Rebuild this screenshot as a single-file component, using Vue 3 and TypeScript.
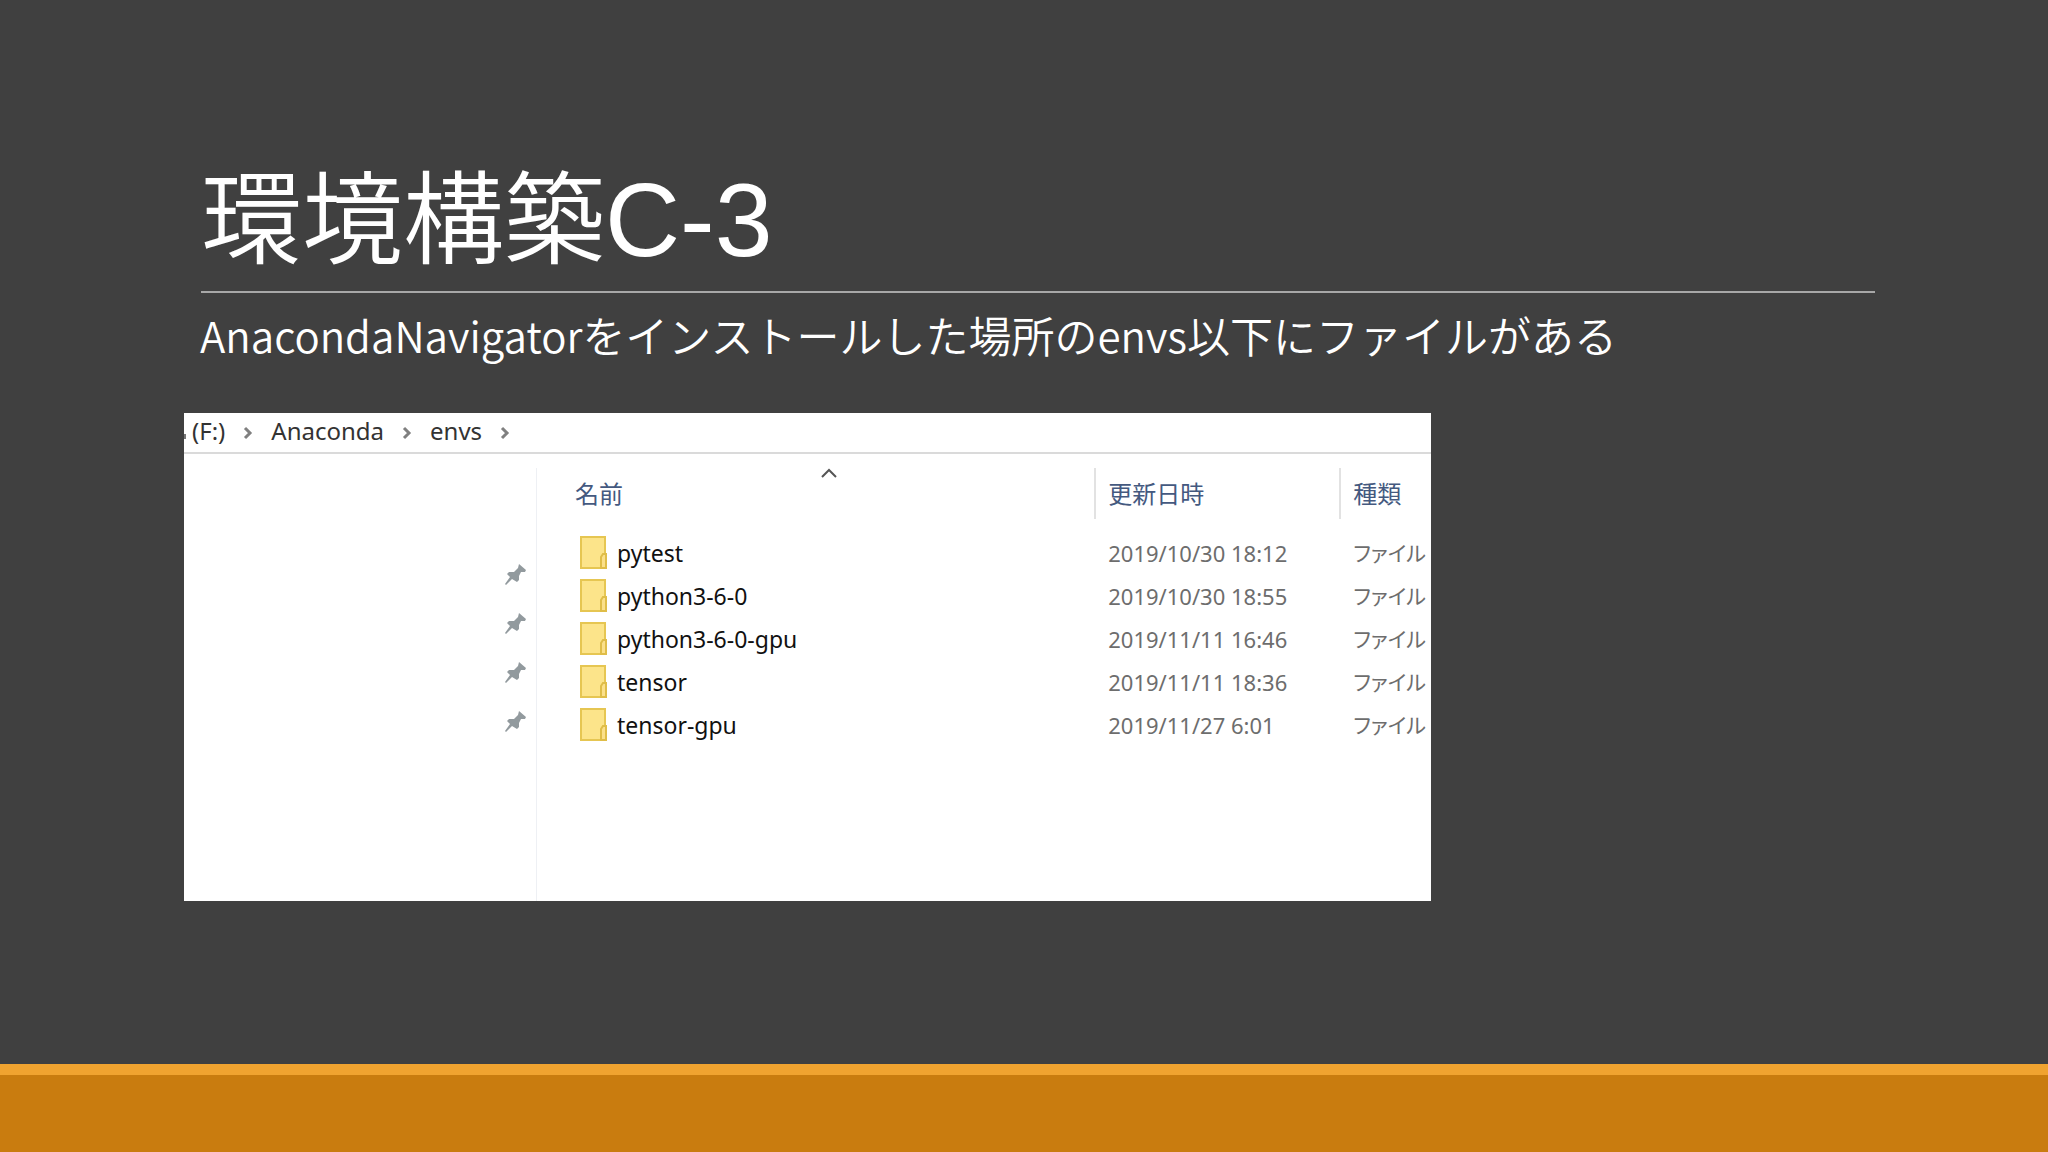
<script setup lang="ts">
interface Entry {
  name: string
  modified: string
  kind: string
}

const crumbs: string[] = ['(F:)', 'Anaconda', 'envs']
const kind = 'ファイル'
const entries: Entry[] = [
  { name: 'pytest', modified: '2019/10/30 18:12', kind },
  { name: 'python3-6-0', modified: '2019/10/30 18:55', kind },
  { name: 'python3-6-0-gpu', modified: '2019/11/11 16:46', kind },
  { name: 'tensor', modified: '2019/11/11 18:36', kind },
  { name: 'tensor-gpu', modified: '2019/11/27 6:01', kind },
]
const pinCount = 4
</script>

<template>
  <main class="slide">
    <header class="heading">
      <h1>環境構築<span class="latin">C-3</span></h1>
    </header>
    <p class="lead">
      <span class="word">AnacondaNavigator</span>をインストールした場所の<span class="word">envs</span>以下にファイルがある
    </p>

    <section class="explorer">
      <nav class="path">
        <template v-for="crumb in crumbs" :key="crumb">
          <a href="#">{{ crumb }}</a>
          <svg class="chevron" viewBox="0 0 10 14" aria-hidden="true">
            <path d="M2 2l5 5-5 5" fill="none" stroke="#808080" stroke-width="3" />
          </svg>
        </template>
      </nav>

      <div class="body">
        <aside class="pins">
          <svg v-for="n in pinCount" :key="n" class="pin" viewBox="0 0 21 21" aria-hidden="true">
            <path
              d="M14 0l7 6-1 2-4 0-2 4 0 4-2 2-5-3-6 6-1-1 5-7-3-3 2-2 5 0 4-4z"
              fill="#929a9e"
            />
          </svg>
        </aside>

        <div class="list">
          <table>
            <colgroup>
              <col />
              <col class="col-date" />
              <col class="col-kind" />
            </colgroup>
            <thead>
              <tr>
                <th scope="col" class="name">
                  名前
                  <svg class="sort" viewBox="0 0 16 10" aria-hidden="true">
                    <path d="M1 9l7-7 7 7" fill="none" stroke="#555" stroke-width="2" />
                  </svg>
                </th>
                <th scope="col">更新日時</th>
                <th scope="col">種類</th>
              </tr>
            </thead>
            <tbody>
              <tr v-for="entry in entries" :key="entry.name">
                <td class="name">
                  <div class="file">
                    <svg class="folder" viewBox="0 0 27 33" aria-hidden="true">
                      <path d="M1 1h24v18l1 1v12H1z" fill="#fce48a" stroke="#e6c652" stroke-width="2" />
                      <path d="M21 32V21l2-3h3v14z" fill="#fbe08a" stroke="#dfbd48" stroke-width="2" />
                    </svg>
                    <span>{{ entry.name }}</span>
                  </div>
                </td>
                <td class="date">{{ entry.modified }}</td>
                <td class="kind">{{ entry.kind }}</td>
              </tr>
            </tbody>
          </table>
        </div>
      </div>
    </section>

    <footer class="band"></footer>
  </main>
</template>

<style>
body {
  margin: 0;
  background: #404040;
}
</style>

<style scoped>
.slide {
  box-sizing: border-box;
  display: flex;
  flex-direction: column;
  min-height: 100vh;
  padding-top: 137px;
  background: #404040;
  color: #fff;
  font-family: 'Noto Sans CJK JP', sans-serif;
}
.heading {
  margin: 0 173px 0 201px;
  padding-bottom: 4px;
  border-bottom: 2px solid #a8a8a8;
}
h1 {
  margin: 0;
  font-size: 101px;
  line-height: 150px;
  font-weight: 350;
}
.latin {
  font-family: 'Liberation Sans', sans-serif;
  font-size: 104px;
  line-height: 1;
}
.lead {
  margin: 9px 173px 0 200px;
  font-size: 43px;
  line-height: 64px;
  font-weight: 350;
}
.word {
  font-size: 42px;
  line-height: 1;
}
.explorer {
  display: flex;
  flex-direction: column;
  width: 60.9%;
  min-height: 488px;
  margin: 47px 0 0 184px;
  background: #fff;
  color: #111;
  font-family: 'Noto Sans', 'Noto Sans CJK JP', sans-serif;
  font-size: 23px;
}
.path {
  display: flex;
  align-items: center;
  height: 39px;
  border-bottom: 2px solid #dadada;
  font-size: 24px;
  line-height: 32px;
}
.path::before {
  width: 2px;
  height: 5px;
  margin: 8px 6px 0 0;
  background: #777;
  content: '';
}
.path a {
  padding-bottom: 4px;
  color: #333;
  text-decoration: none;
}
.chevron {
  width: 10px;
  height: 14px;
  margin: 0 18px;
}
.body {
  display: flex;
  flex: 1;
  padding-top: 14px;
}
.pins {
  display: flex;
  flex: 0 0 353px;
  flex-direction: column;
  align-items: flex-end;
  gap: 28px;
  box-sizing: border-box;
  padding: 96px 10px 0 0;
  border-right: 1px solid #eef0f4;
}
.pin {
  width: 21px;
  height: 21px;
}
.list {
  flex: 1;
  min-width: 0;
}
table {
  width: 100%;
  table-layout: fixed;
  border-collapse: collapse;
}
.col-date {
  width: 245px;
}
.col-kind {
  width: 91px;
}
th {
  position: relative;
  height: 49px;
  padding: 0 0 2px 12px;
  border-left: 2px solid #e2e2e2;
  color: #44597f;
  font-family: 'Noto Sans CJK JP', sans-serif;
  font-size: 24px;
  line-height: 36px;
  font-weight: 400;
  text-align: left;
}
th.name {
  padding-left: 38px;
  border-left: 0;
}
.sort {
  position: absolute;
  top: 0;
  left: 284px;
  width: 16px;
  height: 10px;
}
tbody::before {
  display: block;
  height: 12px;
  content: '';
}
td {
  height: 43px;
  padding: 0 0 0 13px;
  color: #6d6d6d;
  line-height: 32px;
  white-space: nowrap;
}
td.name {
  padding-left: 43px;
  color: #111;
}
.file {
  display: flex;
  align-items: center;
  gap: 10px;
}
.folder {
  width: 27px;
  height: 33px;
}
.date {
  font-size: 22px;
}
.kind {
  font-size: 21px;
  font-feature-settings: 'palt';
}
.band {
  height: 77px;
  margin-top: auto;
  border-top: 11px solid #f0a330;
  background: #c97c0f;
}
</style>
